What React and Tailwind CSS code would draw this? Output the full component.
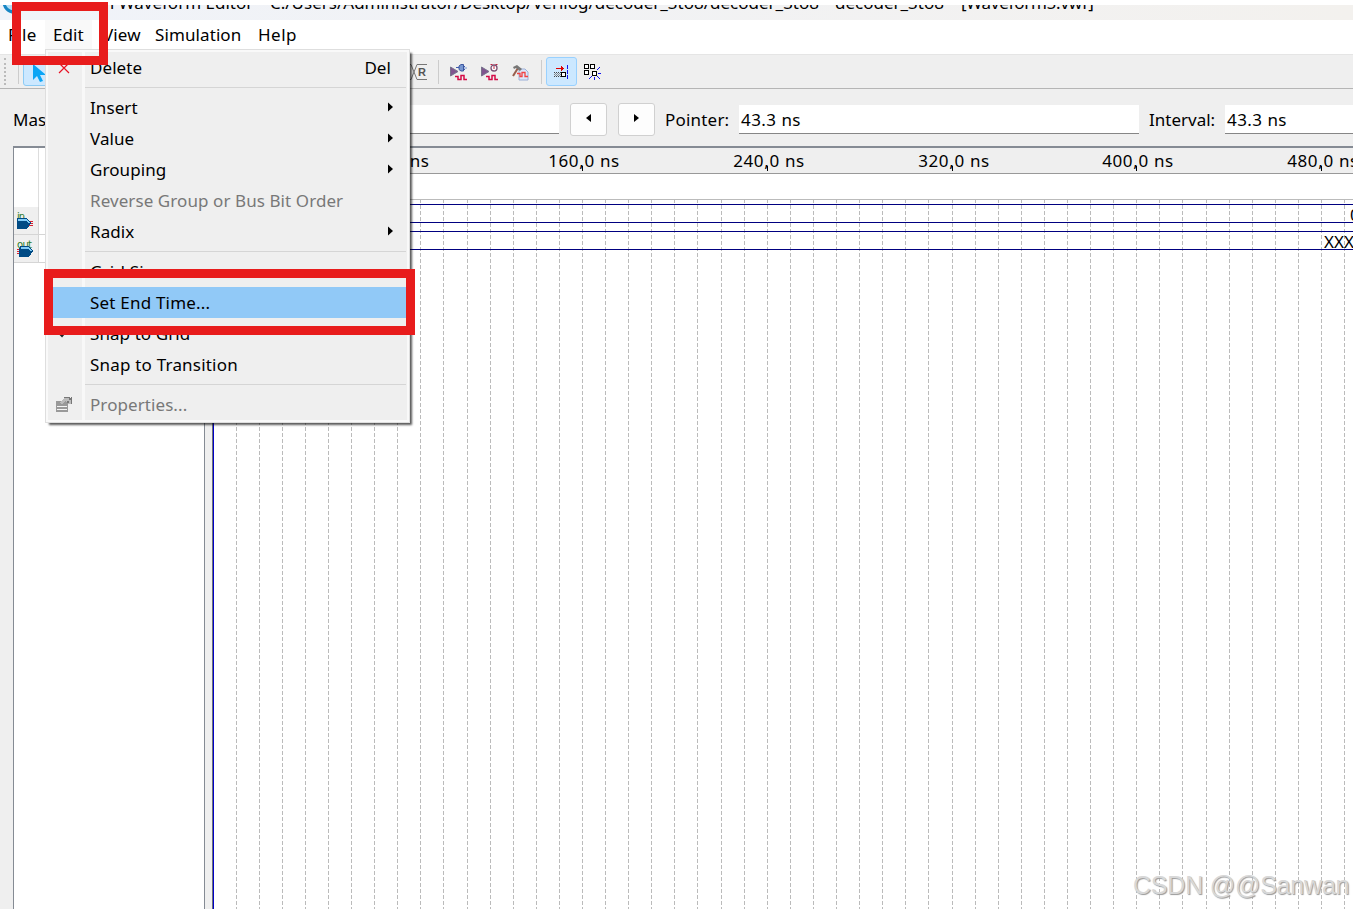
const FONT = '"Noto Sans", "Open Sans", sans-serif';

const MENU = [
  { label: "Delete", shortcut: "Del", icon: "delete" },
  { divider: true },
  { label: "Insert", sub: true },
  { label: "Value", sub: true },
  { label: "Grouping", sub: true },
  { label: "Reverse Group or Bus Bit Order", disabled: true },
  { label: "Radix", sub: true },
  { divider: true },
  { label: "Grid Size...", wide: true },
  { label: "Set End Time...", active: true, wide: true },
  { label: "Snap to Grid", icon: "check" },
  { label: "Snap to Transition", wide: true },
  { divider: true },
  { label: "Properties...", disabled: true, icon: "properties" },
];

// one grid line every 10 ns
const gridLines = Array.from({ length: 49 }, (_, i) =>
  Math.round(212.5 + 23.094 * (i + 1)) - 214
);

const timeLabels = [
  { x: 397, text: "80,0 ns" },
  { x: 582, text: "160,0 ns" },
  { x: 767, text: "240,0 ns" },
  { x: 952, text: "320,0 ns" },
  { x: 1136, text: "400,0 ns" },
  { x: 1321, text: "480,0 ns" },
];

function MenuIcon({ name }) {
  if (name === "delete") {
    return (
      <svg width="12" height="12" viewBox="0 0 12 12" stroke="#e81123" strokeWidth="1.2">
        <path d="M1 1 11 11M11 1 1 11" />
      </svg>
    );
  }
  if (name === "check") {
    return (
      <svg className="mr-1" width="12" height="10" viewBox="0 0 12 10" fill="none" stroke="#222" strokeWidth="2">
        <path d="M3 4 6 7 11 1" />
      </svg>
    );
  }
  return (
    <svg width="17" height="15" viewBox="0 0 17 15" shapeRendering="crispEdges">
      <path d="M0 4h12v11H0z" fill="#999" />
      <path d="M1 9h10v1H1zM1 12h10v1H1z" fill="#f4f4f4" />
      <path d="M4 5 8 1h7v6h-3L9 4 6 8z" fill="#bbb" />
      <path d="M8 0h6v1H8zM13 1h2v2h-2zM15 0h1v7h-1zM11 4h2v2h-2z" fill="#777" />
    </svg>
  );
}

function MenuRow({ item }) {
  if (item.divider) {
    return (
      <div className="h-[9px] pt-1 pl-[37px]">
        <div className="h-px bg-[#d5d5d5]" />
      </div>
    );
  }
  return (
    <div
      className={`flex h-[31px] items-center ${item.active ? "bg-[#91c9f7]" : ""} ${
        item.disabled ? "text-[#787878]" : "text-black"
      } ${item.wide ? "tracking-[0.2px]" : "tracking-[0.08px]"}`}
    >
      <div className="flex w-[34px] justify-center pr-0.5">
        {item.icon && <MenuIcon name={item.icon} />}
      </div>
      <span className="flex-1 pl-2">{item.label}</span>
      {item.shortcut && <span className="pr-[15px]">{item.shortcut}</span>}
      {item.sub && (
        <svg className="mr-[13px] mb-[2px]" width="5" height="10" viewBox="0 0 5 10">
          <path d="M0 0.500 5 5 0 9.500z" />
        </svg>
      )}
    </div>
  );
}

function EditMenu() {
  return (
    <div className="absolute top-[49px] left-[45px] h-[374px] w-[365px] border border-[#dedede] bg-[#f9f9f9] p-[2px] shadow-[3px_3px_2px_-1px_rgba(0,0,0,0.65)]">
      <div className="relative h-full bg-[#efefef] pr-px">
        <div className="absolute top-0 left-[34px] h-full w-[3px] bg-[#f8f8f8]" />
        <div className="relative">
          {MENU.map((item, i) => (
            <MenuRow key={i} item={item} />
          ))}
        </div>
      </div>
    </div>
  );
}

function SimIcon({ clock }) {
  return (
    <svg width="17" height="17" viewBox="0 0 17 17">
      <path d="M0.500 3v9L8 7.500z" fill="#80558f" stroke="#77758c" />
      {clock ? (
        <g>
          <circle cx="13" cy="4" r="3" fill="#fff" stroke="#794f72" strokeWidth="1.300" />
          <path d="M9.500 0.500h2M14.500 0.500h2M13 2v3" stroke="#c02440" />
        </g>
      ) : (
        <g>
          <path d="M6 3.500h4M13 2.500h2M13 5.500h2" stroke="#405db0" />
          <path d="M9 2l2-1.500h2.500v6.500H11L9 5.500z" fill="#7797d1" stroke="#3c579f" />
          <path d="M14 4h3" stroke="#7797d1" />
        </g>
      )}
      <path d="M5 12.500h3v3h3v-4h3v4h3" fill="none" stroke="#d40b47" strokeWidth="1.500" />
    </svg>
  );
}

function Toolbar() {
  return (
    <div className="flex h-[35px] items-center border-t border-b border-t-[#e5e5e5] border-b-[#b5b5b5] bg-[#efefef]">
      <div className="ml-1 h-[27px] w-0.5 border-l-2 border-dotted border-[#bbb]" />
      <div className="ml-3 h-6 w-px bg-[#ccc]" />
      <div className="ml-1 flex h-7 w-[30px] items-center justify-center rounded-[3px] border border-[#8ccbf5] bg-[#cce8ff]">
        <svg className="mt-1 ml-px" width="14" height="19" viewBox="0 0 14 19" fill="#0ba5f5">
          <path d="M1 0v16l4-4 3 6 3-1-3-6h6z" />
        </svg>
      </div>
      <div className="ml-[357px] flex items-center">
        <svg className="mt-px" width="17" height="17" viewBox="0 0 17 17" fill="none" stroke="#777">
          <path d="M0 0.500h1l6 15h10M0 15.500h1L7 0.500h10" />
          <text x="8" y="12" fontSize="11" fontWeight="bold" fill="#555" stroke="none" fontFamily="Liberation Sans">
            R
          </text>
        </svg>
        <div className="ml-[11px] h-6 w-px bg-[#ccc]" />
        <div className="mt-px ml-[11px] flex gap-[14px]">
          <SimIcon />
          <SimIcon clock />
          <svg width="17" height="17" viewBox="0 0 17 17">
            <path d="M7 5h6l3 3v8H7z" fill="#dce7fa" stroke="#9cb0d8" />
            <path d="M6 4 1 12" stroke="#975f4d" strokeWidth="2" />
            <path d="M1 3l4-2 5 4-2 2-4-3-2 1z" fill="#777" />
            <path d="M5 9.500h3v3h2v-4h3v4h3" fill="none" stroke="#f14343" strokeWidth="1.300" />
          </svg>
        </div>
        <div className="ml-[12px] h-6 w-px bg-[#ccc]" />
        <div className="ml-1 flex h-[29px] w-[31px] items-center justify-center rounded-[3px] border border-[#99d1ff] bg-[#cce8ff]">
          <svg className="mt-0.5" width="15" height="15" viewBox="0 0 15 15" shapeRendering="crispEdges">
            <path d="M2 3.500h8" stroke="#e00000" />
            <path d="M7 1v5l3-2.500z" fill="#e00000" />
            <path d="M0 7.500h7M0 11.500h7" stroke="#444" strokeDasharray="1 1" />
            <path d="M1 8.500h6M1 10.500h6M0 9.500h7" stroke="#888" strokeDasharray="1 1" />
            <path d="M7.500 7.500h4v4h-4z" fill="#fff" stroke="#000" />
            <path d="M13.500 0v15" stroke="#1414ef" strokeDasharray="4 1" />
          </svg>
        </div>
        <svg className="mt-px ml-[7px]" width="17" height="16" viewBox="0 0 17 16" fill="#fff" stroke="#000" shapeRendering="crispEdges">
          <path d="M0.500 0.500h4v4h-4zM6.500 0.500h4v4h-4zM0.500 6.500h4v4h-4zM8.500 7.500h4v4h-4z" />
          <path d="M13 6l3-3M14 9.500h3M13 12l3 3M10.500 13v3M8 12l-3 3" stroke="#1414ef" />
        </svg>
      </div>
    </div>
  );
}

function ArrowButton({ dir }) {
  return (
    <div className="ml-[11px] flex h-[33px] w-[37px] shrink-0 items-center justify-center rounded-[3px] border border-[#d0d0d0] bg-[#fdfdfd] pb-[2px]">
      <svg width="5" height="8" viewBox="0 0 5 8">
        <path d={dir === "left" ? "M5 0 0 4 5 8z" : "M0 0 5 4 0 8z"} />
      </svg>
    </div>
  );
}

function TimeBar() {
  return (
    <div className="flex h-[57px] items-center overflow-hidden pt-[3px] pl-[13px] whitespace-nowrap">
      <span className="w-[147px] shrink-0">Master Time Bar:</span>
      <div className="h-[29px] w-[399px] shrink-0 border-b border-[#868686] bg-white" />
      <ArrowButton dir="left" />
      <ArrowButton dir="right" />
      <span className="ml-[10px] w-[74px] shrink-0 tracking-[0.2px]">Pointer:</span>
      <div className="h-[29px] w-[400px] shrink-0 border-b border-[#868686] bg-white pl-[2px] leading-[29px] tracking-[0.45px]">
        43.3 ns
      </div>
      <span className="ml-[10px] w-[76px] shrink-0">Interval:</span>
      <div className="h-[29px] w-[200px] shrink-0 border-b border-[#868686] bg-white pl-[2px] leading-[29px] tracking-[0.45px]">
        43.3 ns
      </div>
    </div>
  );
}

function PinIcon({ type }) {
  return (
    <svg width="18" height="19" viewBox="0 0 18 19">
      <text x="0" y="8" fontSize="10" fill="#2c7a2c" fontFamily="DejaVu Sans" textLength={type === "in" ? 8 : 15}>
        {type}
      </text>
      {type === "in" ? (
        <g shapeRendering="crispEdges">
          <path d="M10 9.500h6M10 11.500h6M10 13.500h6" stroke="#d82030" />
          <path d="M0 6h9l5 5-4 6H0z" fill="#004b85" />
          <path d="M1 7h9l3 4h-2L9 9H1z" fill="#80ccf8" />
        </g>
      ) : (
        <g shapeRendering="crispEdges">
          <path d="M0 9.500h6M0 11.500h6M0 13.500h6" stroke="#d82030" />
          <path d="M3 6h9l4 5-4 6H2v-7z" fill="#004b85" />
          <path d="M4 7h8l3 4h-2l-2-2H4z" fill="#80ccf8" />
        </g>
      )}
    </svg>
  );
}

function Waveform() {
  return (
    <div className="ml-[13px] flex h-[763px] border-t-2 border-l border-[#858b94]">
      <div className="w-[191px] shrink-0 border-r border-[#858b94] bg-white">
        <div className="h-[59px] w-[25px] border-r border-[#ddd]" />
        {["in", "out"].map((type) => (
          <div key={type} className="flex h-[28px] border-b border-[#d5d5d5]">
            <div className="w-[25px] border-r border-[#d5d5d5] bg-[#efefef] pt-[5px] pl-[3px]">
              <PinIcon type={type} />
            </div>
          </div>
        ))}
      </div>
      <div className="w-[8px] shrink-0 border-r border-[#6b7078] bg-[#efefef]" />
      <div className="min-w-0 flex-1 overflow-hidden border-l border-[#0000c8] bg-white">
        <svg width="1139" height="762" viewBox="0 0 1139 762">
          <rect width="1139" height="25" fill="#efefef" />
          <path d="M0 25.500H1139" stroke="#999" />
          {gridLines.map((x) => (
            <path key={x} d={`M${x + 0.5} 51V762`} stroke="#bbb" strokeDasharray="4 2" />
          ))}
          <path d="M0 51.500H1139" stroke="#bbb" />
          <path d="M0 56.500H1139M0 74.500H1139" stroke="#000080" />
          <path d="M0 83.500H1139M0 101.500H1139" stroke="#000080" />
          {timeLabels.map(({ x, text }) => (
            <g key={x}>
              <path d={`M${x - 213.5} 18V23`} stroke="#000" />
              <text x={x - 214 + 2} y="19" fontSize="17" letterSpacing="0.65" textAnchor="middle">
                {text}
              </text>
            </g>
          ))}
          <text x="1136" y="73" fontSize="17">
            0
          </text>
          <text x="1110" y="100" fontSize="17">
            XXX
          </text>
        </svg>
      </div>
    </div>
  );
}

export default function App() {
  return (
    <div
      className="relative h-[909px] w-[1353px] overflow-hidden bg-[#efefef] text-[17px] leading-[23px] text-black"
      style={{ fontFamily: FONT }}
    >
      <div className="h-[5px] bg-white" />
      <div className="relative h-[15px] overflow-hidden bg-gradient-to-r from-[#f0f3f9] to-[#f3f1ee]">
        <svg className="absolute -top-[11px] left-0.5" width="24" height="20" viewBox="0 0 24 20" fill="none">
          <circle cx="12" cy="8" r="10" fill="#b4def5" stroke="#1786c4" strokeWidth="3" />
        </svg>
        <div className="absolute -top-[14px] left-[29px] flex whitespace-pre">
          <span className="w-[241px]">Simulation Waveform Editor</span>
          <span className="w-[565px]">C:/Users/Administrator/Desktop/Verilog/decoder_3to8/decoder_3to8</span>
          <span className="w-[126px]">decoder_3to8</span>
          <span className="tracking-[-0.25px]">[Waveform5.vwf]</span>
        </div>
      </div>
      <div className="flex h-[34px] items-start bg-white tracking-[0.1px]">
        <span className="w-[37px] pt-[3px] pl-2 tracking-[0.4px]">File</span>
        <span className="ml-2 h-[29px] w-[47px] bg-[#f9f9f9] pt-[3px] pl-2">Edit</span>
        <span className="ml-[11px] w-[52px] pt-[3px]">View</span>
        <span className="w-[103px] pt-[3px]">Simulation</span>
        <span className="pt-[3px] tracking-[0.5px]">Help</span>
      </div>
      <Toolbar />
      <TimeBar />
      <Waveform />
      <EditMenu />
      <div className="absolute top-0.5 left-3 h-[63px] w-24 border-[9px] border-[#e81c1c]" />
      <div className="absolute top-[269px] left-[44px] h-[66px] w-[371px] border-[9px] border-[#e81c1c]" />
      <div
        className="absolute top-[869px] left-[1133px] text-[25px] leading-8 tracking-[-0.2px] whitespace-nowrap text-[#d8d8d8] [text-shadow:1px_1px_1px_#999]"
        style={{ fontFamily: '"Liberation Sans", sans-serif' }}
      >
        CSDN @@Sanwan
      </div>
    </div>
  );
}
